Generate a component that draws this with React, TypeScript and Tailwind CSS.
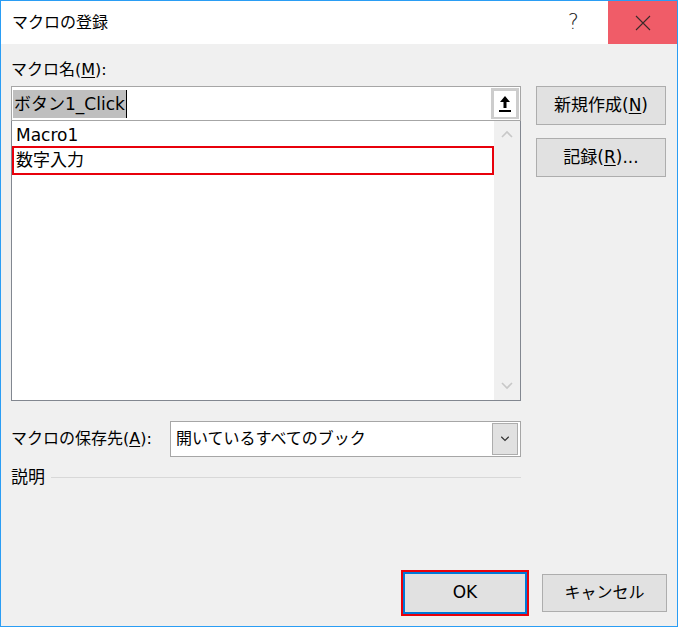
import { Fragment } from 'react';

const FONT = "font-['DejaVu_Sans','Noto_Sans_CJK_JP',sans-serif]";

function Key({ k }: { k: string }) {
  return (
    <Fragment>
      (<span className="underline underline-offset-2">{k}</span>)
    </Fragment>
  );
}

function Chevron({ up, className }: { up?: boolean; className?: string }) {
  return (
    <svg width="12" height="8" viewBox="0 0 12 8" className={className}>
      <path d={up ? 'M1 7 L6 2 L11 7' : 'M1 1 L6 6 L11 1'} fill="none" stroke="currentColor" strokeWidth="1.6" />
    </svg>
  );
}

function SideButton({ children }: { children: React.ReactNode }) {
  return (
    <button className="flex h-[39px] w-[130px] items-center justify-center border border-[#adadad] bg-[#e1e1e1] text-[17px] text-black">
      {children}
    </button>
  );
}

export default function App() {
  return (
    <div className={`flex h-[627px] w-[678px] flex-col border border-[#2a9df4] bg-[#f0f0f0] text-black ${FONT}`}>
      {/* title bar */}
      <div className="flex h-[43px] shrink-0 items-center bg-white">
        <span className="pl-[11px] text-[16px]">マクロの登録</span>
        <span className="ml-auto mr-[29px] text-[21px] font-light text-[#222]">?</span>
        <div className="flex h-full w-[69px] items-center justify-center bg-[#f05c68]">
          <svg width="16" height="16" viewBox="0 0 16 16">
            <path d="M1 1 L15 15 M15 1 L1 15" stroke="#3a2a2a" strokeWidth="1.1" />
          </svg>
        </div>
      </div>

      <div className="flex flex-1 flex-col pl-[10px] pr-[10px]">
        <div className="mt-[16px] h-[26px] text-[16px] leading-[20px]">
          マクロ名<Key k="M" />:
        </div>

        <div className="flex gap-[15px]">
          {/* left column */}
          <div className="flex w-[510px] flex-col">
            <div className="flex h-[35px] items-center border border-[#a6a6a6] bg-white pl-[1px] pr-[1px]">
              <span className="bg-[#bfbfbf] px-[1px] text-[17px] leading-[28px]">ボタン1_Click</span>
              <span className="h-[28px] w-[1px] bg-black" />
              <div className="ml-auto flex h-[31px] w-[28px] items-center justify-center bg-[#cdcdcd]">
                <div className="flex h-[26px] w-[22px] items-center justify-center bg-white">
                  <svg width="12" height="18" viewBox="0 0 12 18">
                    <path d="M6 1 L11 7 L7.5 7 L7.5 13 L4.5 13 L4.5 7 L1 7 Z" fill="#000" />
                    <rect x="0" y="15" width="12" height="2" fill="#000" />
                  </svg>
                </div>
              </div>
            </div>

            <div className="flex h-[280px] border border-t-0 border-[#828790] bg-white">
              <div className="flex flex-1 flex-col pt-[3px]">
                <div className="h-[22px] pl-[4px] text-[17px] leading-[22px]">Macro1</div>
                <div className="flex h-[29px] items-center border-2 border-[#e8000b] pl-[2px] text-[17px]">数字入力</div>
              </div>
              <div className="flex w-[26px] flex-col items-center justify-between bg-[#f0f0f0] pb-[10px] pt-[9px] text-[#c8c8c8]">
                <Chevron up />
                <Chevron />
              </div>
            </div>

            <div className="mt-[20px] flex items-center">
              <span className="w-[159px] text-[16px]">
                マクロの保存先<Key k="A" />:
              </span>
              <div className="flex h-[36px] flex-1 items-center border border-[#a6a6a6] bg-white pl-[5px] pr-[2px]">
                <span className="text-[16px]">開いているすべてのブック</span>
                <div className="ml-auto flex h-[32px] w-[26px] items-center justify-center border border-[#adadad] bg-[#e1e1e1] text-[#333]">
                  <Chevron className="scale-75" />
                </div>
              </div>
            </div>

            <div className="mt-[8px] flex items-center">
              <span className="text-[17px]">説明</span>
              <div className="ml-[6px] h-[1px] flex-1 bg-[#d8d8d8]" />
            </div>
          </div>

          {/* right column */}
          <div className="flex flex-col gap-[13px]">
            <SideButton>
              新規作成<Key k="N" />
            </SideButton>
            <SideButton>
              記録<Key k="R" />...
            </SideButton>
          </div>
        </div>

        <div className="mt-auto mb-[10px] flex items-center justify-end gap-[13px]">
          <div className="border-2 border-[#e8000b]">
            <button className="flex h-[42px] w-[124px] items-center justify-center border-2 border-[#0078d7] bg-[#e1e1e1] text-[17px]">
              OK
            </button>
          </div>
          <button className="flex h-[38px] w-[125px] items-center justify-center border border-[#adadad] bg-[#e1e1e1] text-[16px]">
            キャンセル
          </button>
        </div>
      </div>
    </div>
  );
}
